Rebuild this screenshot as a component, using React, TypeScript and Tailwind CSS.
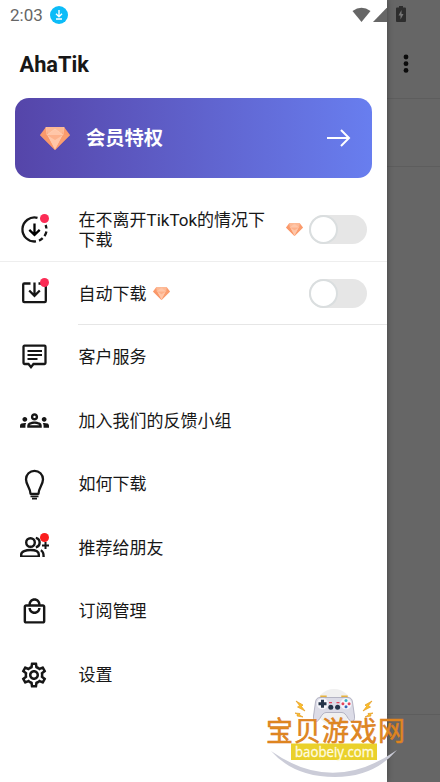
import type { ReactNode } from "react";
import { MdOutlineGroups, MdOutlineLocalMall, MdOutlineSettings } from "react-icons/md";

function Diamond({ className }: { className: string }) {
  return (
    <svg viewBox="0 0 30 23" preserveAspectRatio="none" className={className}>
      <path d="M6 0H24L30 8L15 23L0 8Z" fill="#fb9a6b" />
      <path d="M6 0H24L22 8L15 3L8 8Z" fill="#fdb995" />
      <path d="M15 2L23 8L15 23L7 8Z" fill="#ffc6a8" />
      <path d="M0 8H7L15 23Z" fill="#f9986a" />
      <path d="M23 8H30L15 23Z" fill="#fa9e70" />
      <path d="M6 0L7 8L15 2L23 8L24 0" fill="none" stroke="#ffd3bb" strokeWidth="0.6" />
      <path d="M7 8H23L15 13Z" fill="#fdb18b" />
    </svg>
  );
}

function Toggle() {
  return (
    <div className="flex h-[29px] w-[58px] shrink-0 items-center rounded-full bg-[#e6e6e6]">
      <div className="h-[29px] w-[29px] rounded-full border-2 border-[#dadedf] bg-white" />
    </div>
  );
}

function Dot({ className }: { className: string }) {
  return <span className={`absolute h-[9px] w-[9px] rounded-full ${className}`} />;
}

function DownloadingIcon() {
  return (
    <svg viewBox="0 0 29 29" className="h-[29px] w-[29px]" fill="none" stroke="#161616" strokeWidth="2.3">
      <path d="M17.5 2.9A12 12 0 1 0 16 26.4" />
      <path d="M25.600 10A12 12 0 0 1 26.400 13.500M26.400 16.500A12 12 0 0 1 24.500 21.200M22.700 23.200A12 12 0 0 1 19 25.600" />
      <path d="M14.500 8.500V19.500M9.300 14.800L14.500 19.800L19.700 14.800" stroke="#000" />
    </svg>
  );
}

function InboxIcon() {
  return (
    <svg viewBox="0 0 29 29" className="h-[29px] w-[29px]" fill="none" stroke="#161616" strokeWidth="2.3">
      <path d="M10.500 4.500H4.300Q3.200 4.500 3.200 5.600V22Q3.200 23.200 4.300 23.200H24.700Q25.800 23.200 25.800 22V5.600Q25.800 4.500 24.700 4.500H18.500" />
      <path d="M14.500 3.500V16.500M9.200 11.500L14.500 16.800L19.800 11.500" />
    </svg>
  );
}

function CommentIcon() {
  return (
    <svg viewBox="0 0 29 29" className="h-[29px] w-[29px]" fill="none" stroke="#161616">
      <path d="M4.500 2.700H24.500Q25.500 2.700 25.500 3.700V20Q25.500 21 24.500 21H13.500L11 24.200L8.500 21H4.500Q3.500 21 3.500 20V3.700Q3.500 2.700 4.500 2.700Z" strokeWidth="2.3" />
      <path d="M7.500 8H22M7.500 12H22M7.500 16H17.500" strokeWidth="2.2" />
    </svg>
  );
}

function BulbIcon() {
  return (
    <svg viewBox="0 0 29 31" className="h-[31px] w-[29px]" fill="none" stroke="#161616">
      <path d="M10.500 24.800C10.500 19 6 16 6 10.300A8.500 8.500 0 0 1 23 10.300C23 16 18.500 19 18.500 24.800Z" strokeWidth="2.300" strokeLinejoin="round" />
      <path d="M10.500 27.300H18.500M12 29.700H17" strokeWidth="1.800" />
    </svg>
  );
}

function InviteIcon() {
  return (
    <svg viewBox="0 0 29 29" className="h-[29px] w-[29px]" fill="none" stroke="#161616" strokeWidth="2.400">
      <circle cx="10.500" cy="9.500" r="4.300" />
      <path d="M1.200 24V21.500C1.200 18.500 6 17 10.500 17S18.800 18.500 18.800 21.500V24" />
      <path d="M1 23.200H19" strokeWidth="1.600" />
      <path d="M15.800 4.800A4.800 4.800 0 0 1 15.800 14.200M20.800 17.300C23.200 18.500 23.800 20 23.600 24" />
      <path d="M25.500 9V16M22 12.500H29" strokeWidth="2" />
    </svg>
  );
}

type RowProps = { icon: ReactNode; label: string; dot?: string; gem?: boolean };

function Row({ icon, label, dot, gem }: RowProps) {
  return (
    <div className="flex h-[63.5px] items-center pl-[19.5px]">
      <div className="relative flex w-[29px] shrink-0 justify-center text-[#161616]">
        {icon}
        {dot && <Dot className={dot} />}
      </div>
      <span className="ml-[30px] text-[17px] leading-5">{label}</span>
      {gem && <Diamond className="ml-[6px] h-[13px] w-[17px]" />}
    </div>
  );
}

function Watermark() {
  return (
    <svg viewBox="0 0 185 102" className="absolute left-[255px] top-[680px] z-20 h-[102px] w-[185px]">
      <circle cx="79" cy="27" r="18" fill="#f0f0f0" />
      <path d="M16 71Q78 115 142 70Q119 97 80 97Q39 97 16 71Z" fill="#cbccd8" />
      {/* game pad */}
      <path d="M66 17.500V16.200H71V17.500M87 17.500V16.200H92V17.500" fill="none" stroke="#e6b23d" strokeWidth="1.400" />
      <path d="M65 17.500Q61 17.500 60.500 22L58.500 36Q58 42 61.500 41.500C65 41 66 33 71 32.500H87C92 33 93 41 96.500 41.500Q100 42 99.500 36L97.500 22Q97 17.500 93 17.500Z" fill="#dcdce7" stroke="#9d9eb1" strokeWidth="0.700" />
      <circle cx="67.500" cy="23.700" r="5.600" fill="#f5f5fb" />
      <path d="M67.500 19.700V27.700M63.500 23.700H71.500" stroke="#253449" strokeWidth="3" />
      <circle cx="91" cy="23.700" r="5.600" fill="#f5f5fb" />
      <circle cx="91" cy="20.600" r="1.500" fill="#37b5c6" />
      <circle cx="91" cy="26.800" r="1.500" fill="#3465b8" />
      <circle cx="87.900" cy="23.700" r="1.500" fill="#e3465c" />
      <circle cx="94.100" cy="23.700" r="1.500" fill="#e3465c" />
      <circle cx="75.800" cy="27.300" r="2.500" fill="#253449" />
      <circle cx="82.600" cy="27.300" r="2.500" fill="#253449" />
      <path d="M74 22.700H77M81.500 22.700H84.500" stroke="#e3465c" strokeWidth="1.200" />
      {/* sparks */}
      <path d="M41 21L48 25L46.500 26.500L50 31L42.500 27L44.500 25.500ZM40 33L45 33.500L44.500 35L48 37L42 36L42.500 34.500ZM117 21L110 25L111.500 26.500L108 31L115.500 27L113.500 25.500ZM118 33L113 33.500L113.500 35L110 37L116 36L115.500 34.500Z" fill="#fac02a" stroke="#e59b22" strokeWidth="0.700" />
      <rect x="36" y="63.500" width="86" height="16.500" fill="#ead12b" />
      <text x="11" y="60.500" textLength="139" fontSize="27" fill="#e08a22" stroke="#d9771a" strokeWidth="0.500" fontFamily="Noto Sans CJK SC, sans-serif">宝贝游戏网</text>
      <text x="40" y="76.500" textLength="79" lengthAdjust="spacingAndGlyphs" fontSize="15" fill="#fffce0" stroke="#fffce0" strokeWidth="0.300" fontFamily="Open Sans, sans-serif">baobeiy.com</text>
    </svg>
  );
}

export default function App() {
  return (
    <div className="relative flex h-[782px] w-[440px] overflow-hidden bg-[#666] font-[Roboto,'Noto_Sans_CJK_SC',sans-serif] text-[#171717]">
      <aside className="z-10 w-[387px] shrink-0 bg-white shadow-[0_0_6px_rgba(0,0,0,0.35)]">
        <div className="flex h-[30px] items-center pl-[10px] text-[#666]">
          <span className="w-[33px] pt-px text-[17px]">2:03</span>
          <svg viewBox="0 0 18 18" className="ml-[7px] h-[18px] w-[18px]">
            <circle cx="9" cy="9" r="9" fill="#0cbcf8" />
            <path d="M9 4V10.500M6 7.800L9 10.700L12 7.800M6 13H12" fill="none" stroke="#fff" strokeWidth="1.400" />
          </svg>
          <svg viewBox="0 0 35 16" className="ml-auto h-[16px] w-[35px]" fill="#666">
            <path d="M0.500 4Q9.500 -2.500 18.500 4L9.500 15Z" />
            <path d="M36 -0.500V15H21Z" />
          </svg>
        </div>

        <h1 className="flex h-[68px] items-center pl-[19.5px] pt-[2px] text-[21.8px] font-bold">AhaTik</h1>

        <div className="mx-[15px] flex h-[80px] items-center rounded-[14px] bg-linear-to-r from-[#5545a9] to-[#687eef] pl-[25px] pr-[21px] text-white">
          <Diamond className="h-[23px] w-[30px]" />
          <span className="ml-[16px] pt-[2px] text-[19.3px] font-bold">会员特权</span>
          <svg viewBox="0 0 25 20" className="ml-auto h-[20px] w-[25px]" fill="none" stroke="#fff" strokeWidth="2">
            <path d="M1 10H23M15 2L23 10L15 18" />
          </svg>
        </div>

        <div className="mt-[20px] flex h-[64px] items-center border-b border-[#eee] pl-[19.5px] pr-[20px]">
          <div className="relative w-[29px] shrink-0">
            <DownloadingIcon />
            <Dot className="right-0 top-[-1px] bg-[#fb2c55]" />
          </div>
          <span className="ml-[30px] w-[192px] pt-px text-[17px] leading-5">在不离开TikTok的情况下下载</span>
          <Diamond className="ml-auto mr-[6px] h-[13px] w-[17px]" />
          <Toggle />
        </div>

        <div className="flex h-[63px] items-center pr-[20px]">
          <div className="flex-1">
            <Row icon={<InboxIcon />} label="自动下载" dot="right-0 top-[-1px] bg-[#fb2c55]" gem />
          </div>
          <Toggle />
        </div>
        <div className="-mt-px ml-[78px] h-px bg-[#e6e6e6]" />

        <div className="pt-[0.5px]">
          <Row icon={<CommentIcon />} label="客户服务" />
          <Row icon={<MdOutlineGroups size={29} className="shrink-0" />} label="加入我们的反馈小组" />
          <Row icon={<BulbIcon />} label="如何下载" />
          <Row icon={<InviteIcon />} label="推荐给朋友" dot="right-0 top-0 bg-[#fa1d1d]" />
          <Row icon={<MdOutlineLocalMall size={29} />} label="订阅管理" />
          <Row icon={<MdOutlineSettings size={30} className="shrink-0" />} label="设置" />
        </div>
      </aside>

      <div className="flex-1">
        <div className="flex h-[99px] flex-col border-b border-[#5d5d5d]">
          <svg viewBox="0 0 10 16" className="ml-[9px] mt-[6px] h-[16px] w-[10px]">
            <path d="M3 0H7V1.500H9Q10 1.500 10 2.500V15Q10 16 9 16H1Q0 16 0 15V2.500Q0 1.500 1 1.500H3Z" fill="#2d2d2d" />
            <path d="M5.500 4L2.500 9.500H4.500V13.500L7.500 8H5.500Z" fill="#777" />
          </svg>
          <svg viewBox="0 0 6 20" className="ml-[16px] mt-[32px] h-[20px] w-[6px]" fill="#0b0b0b">
            <circle cx="3" cy="3" r="2.400" />
            <circle cx="3" cy="9.700" r="2.400" />
            <circle cx="3" cy="16.400" r="2.400" />
          </svg>
        </div>
        <div className="h-[68px] border-b border-[#5d5d5d]" />
        <div className="h-[548px] border-b border-[#5d5d5d]" />
      </div>
      <Watermark />
    </div>
  );
}
